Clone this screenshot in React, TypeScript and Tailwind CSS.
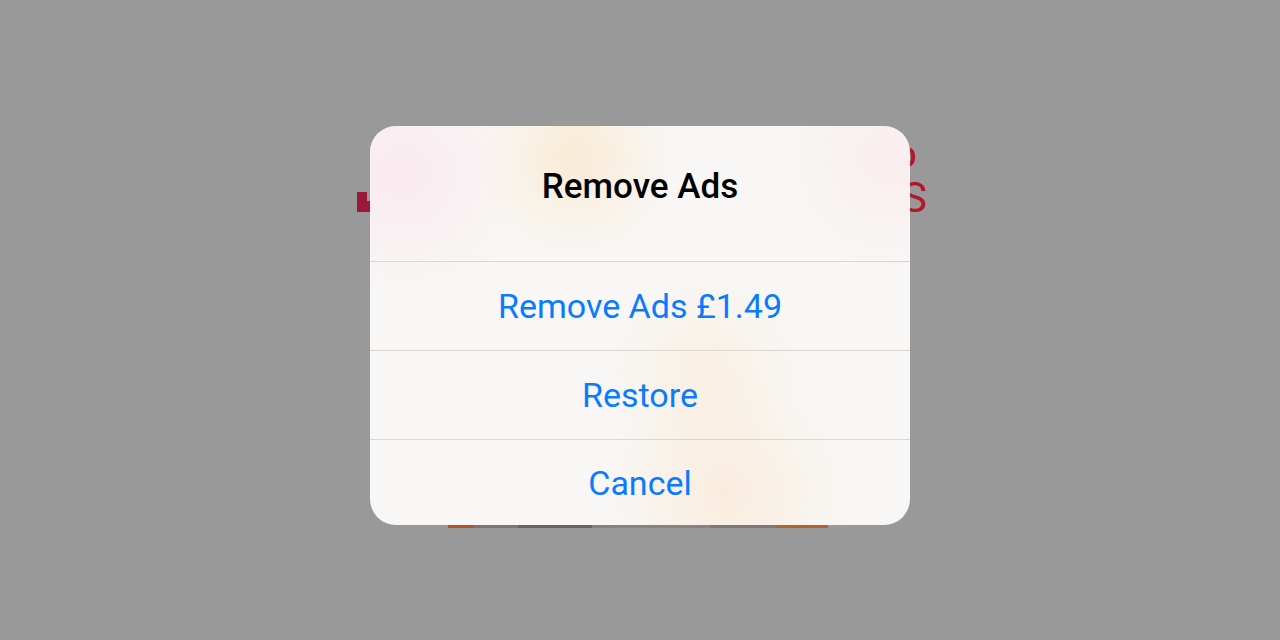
import React from "react";

const font = { fontFamily: "Roboto, 'Noto Sans', sans-serif" };

function Backdrop() {
  return (
    <>
      {/* bits of the app screen that show round the alert */}
      <div className="absolute left-[357px] top-[192px] h-[20px] w-[10px] bg-[#9b1838]" />
      <div className="absolute left-[366px] top-[201px] h-[11px] w-[6px] bg-[#9b1838]" />
      <span
        className="absolute left-[897px] top-[144px] text-[28px] font-bold leading-none text-[#b3172c]"
        style={font}
      >
        O
      </span>
      <span
        className="absolute left-[902px] top-[177px] text-[42px] leading-none text-[#b3172c]"
        style={font}
      >
        S
      </span>
      <div className="absolute left-[448px] top-[518px] flex h-[10px] w-[380px]">
        <div className="w-[26px] bg-[#b6541c]" />
        <div className="w-[44px] bg-[#7a7876]" />
        <div className="w-[74px] bg-[#666463]" />
        <div className="w-[118px] bg-[#868380]" />
        <div className="w-[66px] bg-[#7c7a78]" />
        <div className="flex-1 bg-[#b8622a]" />
      </div>
    </>
  );
}

function Row({ label, last }: { label: string; last?: boolean }) {
  return (
    <div
      className={`flex items-center justify-center border-t border-[#d9d6d3] ${
        last ? "h-[86px]" : "h-[89px]"
      }`}
    >
      <span className="text-[34px] leading-none text-[#0a7bff]" style={font}>
        {label}
      </span>
    </div>
  );
}

export default function App() {
  return (
    <div className="relative h-[640px] w-[1280px] overflow-hidden bg-[#999999]">
      <Backdrop />
      <div className="absolute left-[370px] top-[126px] flex w-[540px] flex-col overflow-hidden rounded-[26px] bg-[#f8f7f5]">
        <div className="pointer-events-none absolute inset-0 bg-[radial-gradient(circle_at_6%_12%,rgba(250,228,236,0.7),transparent_20%),radial-gradient(circle_at_38%_8%,rgba(250,232,205,0.8),transparent_20%),radial-gradient(circle_at_96%_8%,rgba(250,230,236,0.6),transparent_18%),radial-gradient(circle_at_62%_62%,rgba(250,234,214,0.6),transparent_24%),radial-gradient(circle_at_66%_92%,rgba(250,232,212,0.7),transparent_24%)]" />
        <div className="relative flex h-[135px] items-start justify-center pt-[43px]">
          <span
            className="text-[35px] font-medium leading-none text-black"
            style={font}
          >
            Remove Ads
          </span>
        </div>
        <div className="relative">
          <Row label="Remove Ads £1.49" />
          <Row label="Restore" />
          <Row label="Cancel" last />
        </div>
      </div>
    </div>
  );
}
